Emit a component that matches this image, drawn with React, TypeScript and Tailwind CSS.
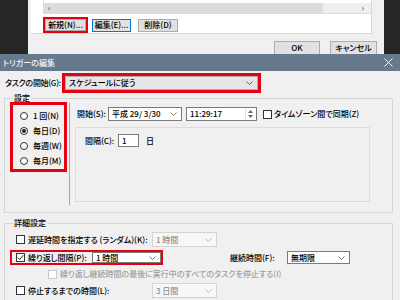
import React from 'react';

const RED = 'border-[#e60012]';

const Chevron = ({ className = 'text-[#555]' }: { className?: string }) => (
  <svg width="7" height="4" viewBox="0 0 7 4" className={className}>
    <polyline points="0.5,0.5 3.5,3.5 6.5,0.5" fill="none" stroke="currentColor" strokeWidth="0.9" />
  </svg>
);

const CheckBox = ({ checked = false, disabled = false }: { checked?: boolean; disabled?: boolean }) => (
  <div className={`w-[9px] h-[9px] border bg-white flex items-center justify-center shrink-0 ${disabled ? 'border-[#c8c8c8]' : 'border-[#333]'}`}>
    {checked && (
      <svg width="7" height="7" viewBox="0 0 7 7">
        <polyline points="0.8,3.6 2.7,5.6 6.3,1.2" fill="none" stroke="#333" strokeWidth="1" />
      </svg>
    )}
  </div>
);

const Radio = ({ checked = false }: { checked?: boolean }) => (
  <div className="w-[8px] h-[8px] rounded-full border border-[#333] bg-white flex items-center justify-center shrink-0">
    {checked && <div className="w-[4px] h-[4px] rounded-full bg-[#222]" />}
  </div>
);

const Select = ({ text, width, height = 'h-[15px]', disabled = false }: { text: string; width: string; height?: string; disabled?: boolean }) => (
  <div className={`${width} ${height} shrink-0 flex items-center justify-between pl-[3px] pr-[4px] border ${disabled ? 'bg-[#f7f7f7] border-[#d4d4d4] text-[#8f8f8f]' : 'bg-white border-[#7a7a7a] text-black'}`}>
    <span>{text}</span>
    <Chevron className={disabled ? 'text-[#b5b5b5]' : 'text-[#666]'} />
  </div>
);

const WinButton = ({ label, width, focused = false }: { label: string; width: string; focused?: boolean }) => (
  <div className={`${width} h-[13px] flex items-center justify-center bg-[#e1e1e1] border ${focused ? 'border-[#0078d7]' : 'border-[#adadad]'}`}>
    {label}
  </div>
);

export default function App() {
  return (
    <div className="w-[400px] h-[300px] overflow-hidden flex flex-col whitespace-nowrap text-[8px] leading-none text-black font-['Noto_Sans_CJK_JP',sans-serif] font-medium [font-feature-settings:'palt']">
      {/* background window */}
      <div className="flex h-[54px] shrink-0 overflow-hidden">
        <div className="w-[28px] bg-[#262626]" />
        <div className="w-[356px] bg-[#f0f0f0] flex flex-col">
          <div className="ml-[3px] w-[341px] h-[38px] bg-white border-r border-b border-[#d9d9d9] flex flex-col">
            <div className="ml-[12px] h-[14px] border-l border-b border-[#dcdcdc] pt-[3px] flex">
              <div className="w-[279px] h-[10px] bg-[#dcdcdc] flex items-center pl-[4px] text-[#555]">‹</div>
              <div className="flex-1 h-[10px] bg-[#efefef] flex items-center justify-end pr-[7px] text-[#555]">›</div>
            </div>
            <div className="flex items-center ml-[12px] mt-[3px]">
              <div className={`w-[45px] h-[16px] border-[2px] ${RED} flex`}>
                <div className="flex-1 flex items-center justify-center bg-[#e1e1e1] border border-[#adadad]">新規(N)...</div>
              </div>
              <div className="ml-[4px]"><WinButton label="編集(E)..." width="w-[39px]" focused /></div>
              <div className="ml-[7px]"><WinButton label="削除(D)" width="w-[40px]" /></div>
            </div>
          </div>
          <div className="flex justify-end gap-[10px] pr-[7px] mt-[7px]">
            <div className="w-[46px] h-[14px] flex items-center justify-center bg-[#e1e1e1] border border-[#adadad]">OK</div>
            <div className="w-[47px] h-[14px] flex items-center justify-center bg-[#e1e1e1] border border-[#adadad]">キャンセル</div>
          </div>
        </div>
        <div className="flex-1 bg-[#262626]" />
      </div>

      {/* dialog */}
      <div className="h-[17px] shrink-0 bg-[#66798d] flex items-center justify-between pl-[3px] pr-[7px] text-[#f4f4f4]">
        <span>トリガーの編集</span>
        <svg width="9" height="9" viewBox="0 0 9 9">
          <path d="M0.5 0.5 L8.5 8.5 M8.5 0.5 L0.5 8.5" stroke="#f4f4f4" strokeWidth="1" />
        </svg>
      </div>
      <div className="flex-1 bg-[#f0f0f0] flex flex-col">
        <div className="mt-[2px] h-[20px] flex items-center">
          <div className="w-[62px] shrink-0 pl-[5px] tracking-[-0.3px]">タスクの開始(G):</div>
          <div className={`w-[199px] h-[20px] shrink-0 border-[3px] ${RED} flex`}>
            <div className="flex-1 bg-[#e5e5e5] border border-[#adadad] flex items-center justify-between pl-[3px] pr-[4px]">
              <span>スケジュールに従う</span>
              <Chevron />
            </div>
          </div>
        </div>

        {/* 設定 */}
        <div className="relative ml-[4px] mt-[5px] w-[389px] h-[115px] shrink-0 border border-[#d5d5d5] flex">
          <span className="absolute -top-[5px] left-[8px] bg-[#f0f0f0] px-[1px]">設定</span>
          <div className={`ml-[5px] mt-[3px] w-[57px] h-[70px] border-[3px] ${RED} flex flex-col pt-[3px] pl-[7px]`}>
            {[['1 回(N)', false], ['毎日(D)', true], ['毎週(W)', false], ['毎月(M)', false]].map(([t, c]) => (
              <div key={t as string} className="h-[15px] flex items-center gap-[5px]">
                <Radio checked={c as boolean} />
                <span>{t as string}</span>
              </div>
            ))}
          </div>
          <div className="ml-[2px] mt-[4px] w-px h-[102px] bg-[#a8a8a8]" />
          <div className="ml-[5px] flex flex-col">
            <div className="mt-[8px] h-[14px] flex items-center">
              <div className="w-[33px] pl-[2px]">開始(S):</div>
              <div className="w-[74px] h-[14px] bg-white border border-[#7a7a7a] flex items-center justify-between pl-[3px] pr-[4px]">
                <span>平成 29/ 3/30</span>
                <Chevron className="text-[#777]" />
              </div>
              <div className="ml-[4px] w-[71px] h-[14px] bg-white border border-[#7a7a7a] flex items-center justify-between pl-[3px] pr-[1px]">
                <span>11:29:17</span>
                <div className="w-[10px] h-[10px] flex flex-col items-center justify-center gap-[2px] border-l border-[#ddd]">
                  <svg width="5" height="3" viewBox="0 0 5 3"><path d="M0 3 L2.5 0 L5 3Z" fill="#666" /></svg>
                  <svg width="5" height="3" viewBox="0 0 5 3"><path d="M0 0 L2.5 3 L5 0Z" fill="#666" /></svg>
                </div>
              </div>
              <div className="ml-[6px] flex items-center gap-[2px]">
                <CheckBox />
                <span>タイムゾーン間で同期(Z)</span>
              </div>
            </div>
            <div className="mt-[6px] w-[295px] h-[75px] border border-[#dcdcdc] flex flex-col">
              <div className="mt-[6px] pl-[9px] h-[13px] flex items-center">
                <span className="w-[33px]">間隔(C):</span>
                <div className="w-[21px] h-[13px] bg-white border border-[#7a7a7a] flex items-center pl-[3px]">1</div>
                <span className="ml-[7px]">日</span>
              </div>
            </div>
          </div>
        </div>

        {/* 詳細設定 */}
        <div className="relative ml-[4px] mt-[10px] w-[389px] flex-1 border-t border-l border-r border-[#d5d5d5] flex flex-col">
          <span className="absolute -top-[5px] left-[8px] bg-[#f0f0f0] px-[1px]">詳細設定</span>
          <div className="mt-[8px] ml-[11px] h-[15px] flex items-center">
            <div className="w-[136px] shrink-0 flex items-center gap-[3px]">
              <CheckBox />
              <span>遅延時間を指定する (ランダム)(K):</span>
            </div>
            <Select text="1 時間" width="w-[65px]" disabled />
          </div>
          <div className="mt-[3px] h-[15px] flex items-center">
            <div className={`ml-[5px] w-[153px] h-[15px] shrink-0 border-[2px] ${RED} flex items-center pl-[4px]`}>
              <div className="w-[76px] shrink-0 flex items-center gap-[3px]">
                <CheckBox checked />
                <span>繰り返し間隔(P):</span>
              </div>
              <Select text="1 時間" width="w-[69px]" height="h-[11px]" />
            </div>
            <span className="ml-[67px] w-[57px] shrink-0">継続時間(F):</span>
            <Select text="無期限" width="w-[63px]" height="h-[13px]" />
          </div>
          <div className="mt-[3px] h-[12px] ml-[43px] flex items-center gap-[3px] text-[#a0a0a0]">
            <CheckBox disabled />
            <span>繰り返し継続時間の最後に実行中のすべてのタスクを停止する(I)</span>
          </div>
          <div className="mt-[3px] ml-[11px] h-[15px] flex items-center">
            <div className="w-[136px] shrink-0 flex items-center gap-[3px]">
              <CheckBox />
              <span>停止するまでの時間(L):</span>
            </div>
            <Select text="3 日間" width="w-[65px]" disabled />
          </div>
        </div>
      </div>
    </div>
  );
}
